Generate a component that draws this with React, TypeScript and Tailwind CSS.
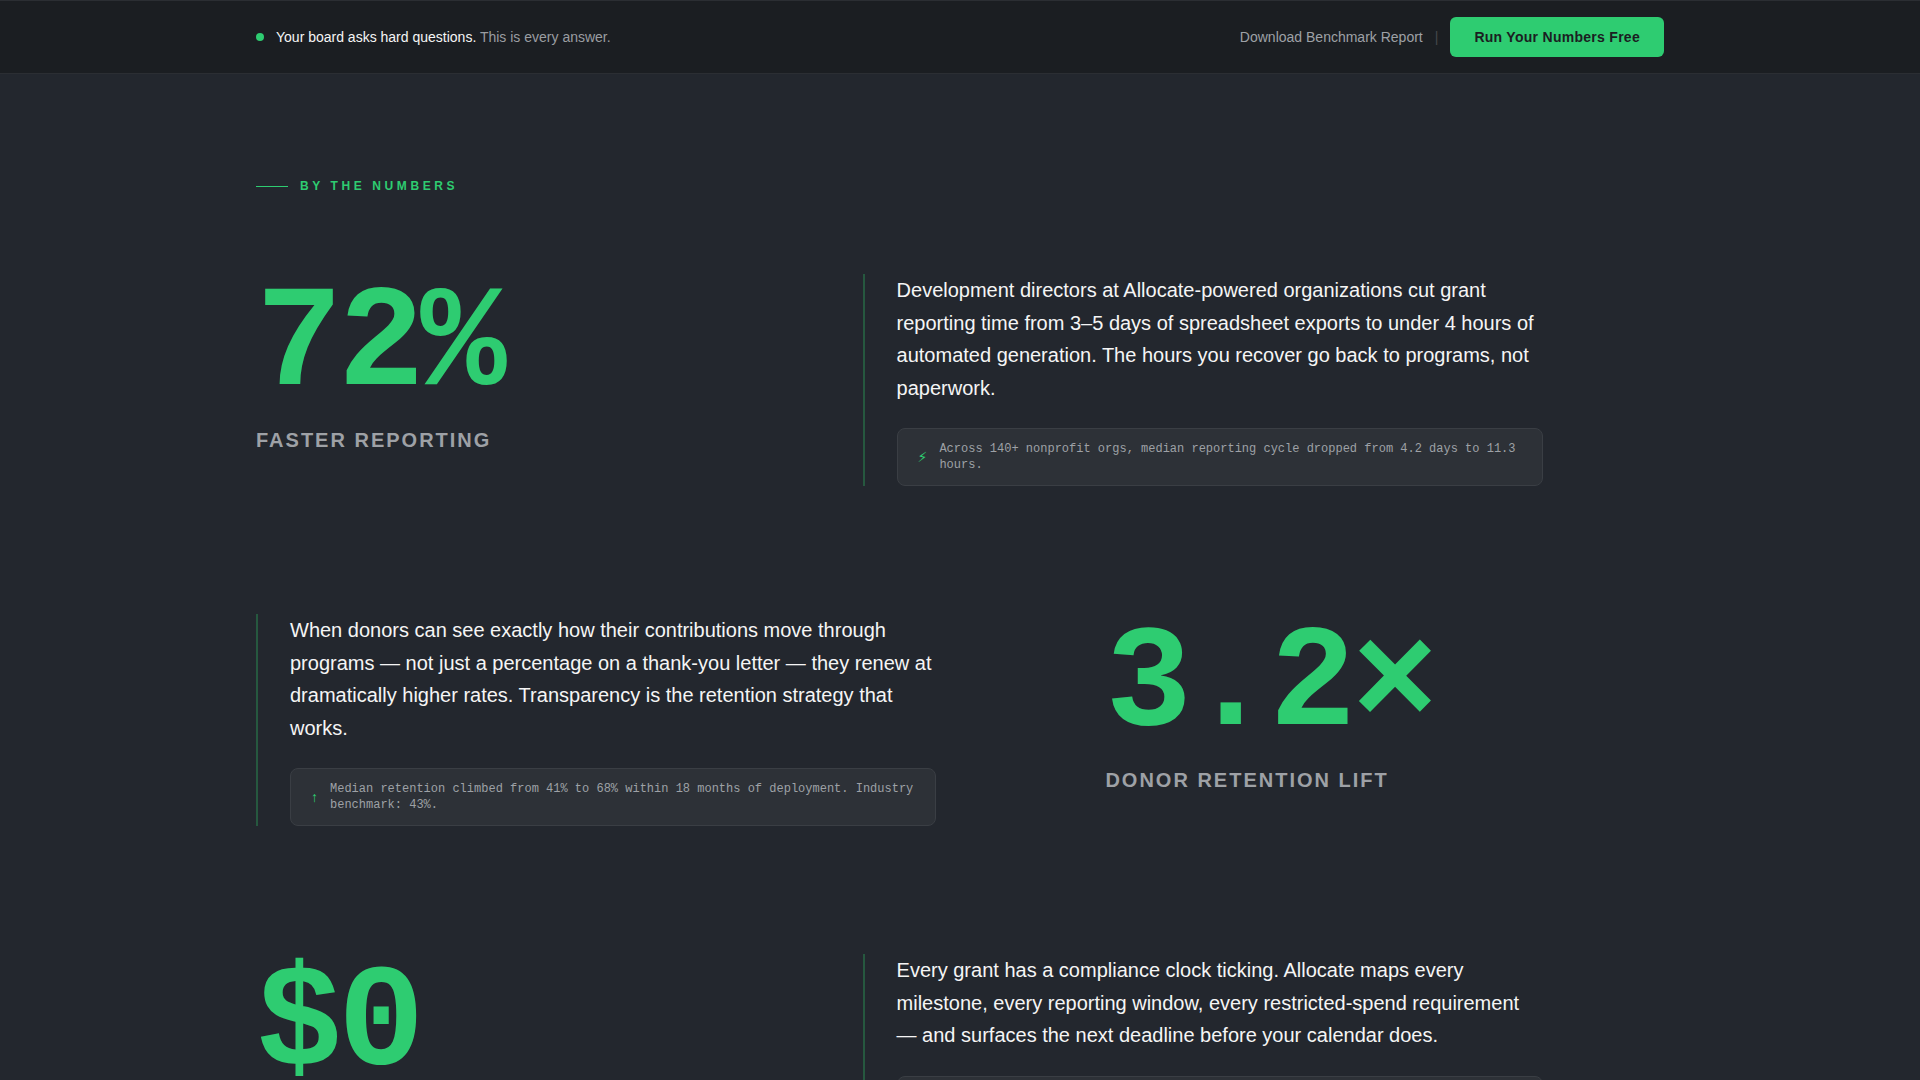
import clsx from "clsx";

interface Stat {
  value: string;
  label: string;
  body: string;
  icon: string;
  note: string;
}

const stats: Stat[] = [
  {
    value: "72%",
    label: "Faster Reporting",
    body: "Development directors at Allocate-powered organizations cut grant reporting time from 3–5 days of spreadsheet exports to under 4 hours of automated generation. The hours you recover go back to programs, not paperwork.",
    icon: "⚡\uFE0E",
    note: "Across 140+ nonprofit orgs, median reporting cycle dropped from 4.2 days to 11.3 hours.",
  },
  {
    value: "3.2×",
    label: "Donor Retention Lift",
    body: "When donors can see exactly how their contributions move through programs — not just a percentage on a thank-you letter — they renew at dramatically higher rates. Transparency is the retention strategy that works.",
    icon: "↑",
    note: "Median retention climbed from 41% to 68% within 18 months of deployment. Industry benchmark: 43%.",
  },
  {
    value: "$0",
    label: "Compliance Penalties",
    body: "Every grant has a compliance clock ticking. Allocate maps every milestone, every reporting window, every restricted-spend requirement — and surfaces the next deadline before your calendar does.",
    icon: "✓",
    note: "Zero missed deadlines reported across all active deployments.",
  },
];

function TopBar() {
  return (
    <header className="sticky top-0 z-10 border-y border-[#2b2e33] bg-[#1b1e22] px-6 py-4">
      <div className="mx-auto flex max-w-[1408px] items-center justify-between">
        <div className="flex items-center gap-3">
          <span className="size-2 rounded-full bg-[#2ecc71]" />
          <p className="text-sm text-[#9a9da1]">
            <span className="text-[#f5f5f5]">Your board asks hard questions.</span> This is every answer.
          </p>
        </div>
        <div className="flex items-center gap-3 text-sm">
          <a href="#report" className="text-[#9ea1a6]">Download Benchmark Report</a>
          <span className="text-[#44484d]" aria-hidden="true">|</span>
          <button className="h-10 rounded-md bg-[#2ecc71] px-6 font-bold tracking-[0.02em] text-[#1b1e22]">
            Run Your Numbers Free
          </button>
        </div>
      </div>
    </header>
  );
}

function StatRow({ stat, flipped }: { stat: Stat; flipped: boolean }) {
  return (
    <article className={clsx("grid gap-12", flipped ? "grid-cols-[33fr_23fr]" : "grid-cols-[23fr_33fr]")}>
      <div className={clsx(flipped && "order-2")}>
        <p className="font-['Liberation_Mono',monospace] text-[144px] leading-none font-bold tracking-[-0.03em] text-[#2ecc71]">
          {stat.value}
        </p>
        <h3 className="mt-2 text-xl font-bold tracking-widest text-[#9ea1a6] uppercase">{stat.label}</h3>
      </div>
      <div className="max-w-[680px] border-l-2 border-[#26583f] pl-8">
        <p className="text-xl leading-relaxed text-[#f5f5f5]">{stat.body}</p>
        <div className="mt-6 flex items-center gap-3 rounded-lg border border-[#3a3e44] bg-[#2d3137] px-5 py-3">
          <span className="font-['Liberation_Sans','DejaVu_Sans',sans-serif] text-sm text-[#2ecc71]">{stat.icon}</span>
          <span className="font-['Liberation_Mono',monospace] text-xs text-[#9ea1a6]">{stat.note}</span>
        </div>
      </div>
    </article>
  );
}

export default function App() {
  return (
    <div className="min-h-screen bg-[#23272e] font-['Liberation_Sans',Arial,sans-serif]">
      <TopBar />
      <main className="px-6 pt-26 pb-32">
        <div className="mx-auto max-w-[1408px]">
          <div className="flex items-center gap-3">
            <span className="h-px w-8 bg-[#2ecc71]" />
            <h2 className="text-xs font-bold tracking-[0.3em] text-[#2ecc71] uppercase">By the Numbers</h2>
          </div>
          <div className="mt-20 space-y-32">
            {stats.map((stat, i) => (
              <StatRow key={stat.label} stat={stat} flipped={i % 2 === 1} />
            ))}
          </div>
        </div>
      </main>
    </div>
  );
}
